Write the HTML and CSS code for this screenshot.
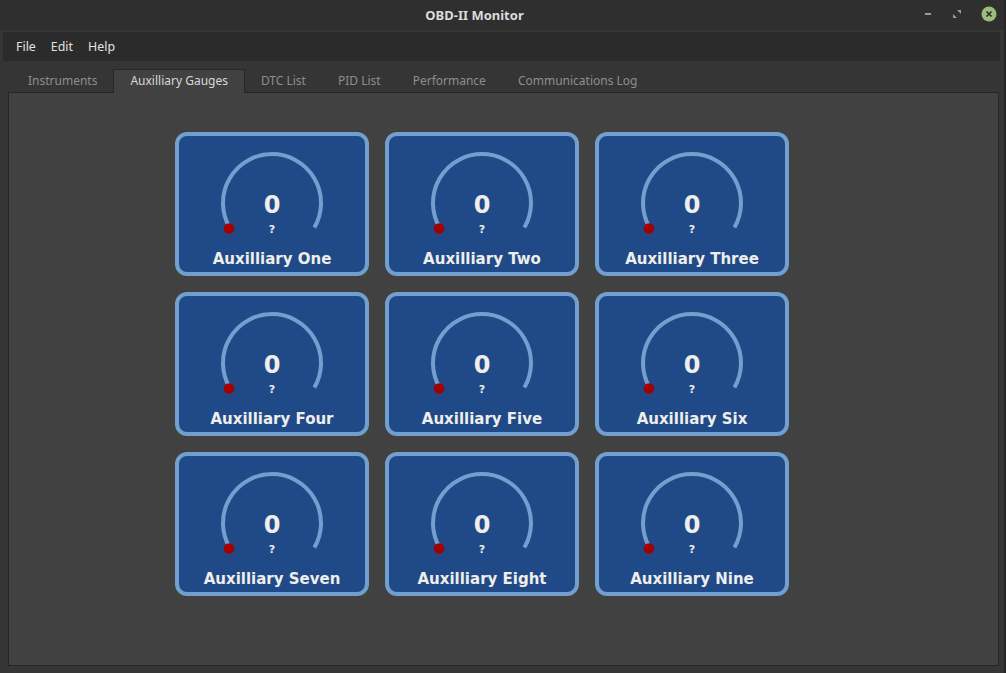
FILE: index.html
```html
<!DOCTYPE html>
<html>
<head>
<meta charset="utf-8">
<title>OBD-II Monitor</title>
<link rel="stylesheet" href="styles.css">
</head>
<body>
<div class="window">
  <div class="titlebar">
    <div class="title">OBD-II Monitor</div>
    <div class="controls">
      <span class="ctl-min"></span>
      <svg class="ctl-max" width="10" height="10" viewBox="0 0 10 10"><path d="M5 1h4v4z M1 5v4h4z" fill="#9a9a9a"/></svg>
      <svg class="ctl-close" width="16" height="16" viewBox="0 0 16 16"><circle cx="8" cy="8" r="7.5" fill="#9bbd7a"/><path d="M5.5 5.5l5 5M10.5 5.5l-5 5" stroke="#2b2b2b" stroke-width="1.6"/></svg>
    </div>
  </div>
  <div class="menubar">
    <span class="menu">File</span>
    <span class="menu">Edit</span>
    <span class="menu">Help</span>
  </div>
  <div class="tabs">
    <div class="tab">Instruments</div>
    <div class="tab active">Auxilliary Gauges</div>
    <div class="tab">DTC List</div>
    <div class="tab">PID List</div>
    <div class="tab">Performance</div>
    <div class="tab">Communications Log</div>
  </div>
  <div class="pane">
    <div class="grid">
      <div class="card"><div class="gauge"><svg viewBox="0 0 186 112" width="186" height="112"><path d="M50.56 91.5 A49 49 0 1 1 135.44 91.5" fill="none" stroke="#729fcf" stroke-width="4"/><circle cx="50" cy="92.5" r="5.3" fill="#a40000"/></svg><div class="value">0</div><div class="unit">?</div></div><div class="label">Auxilliary One</div></div>
      <div class="card"><div class="gauge"><svg viewBox="0 0 186 112" width="186" height="112"><path d="M50.56 91.5 A49 49 0 1 1 135.44 91.5" fill="none" stroke="#729fcf" stroke-width="4"/><circle cx="50" cy="92.5" r="5.3" fill="#a40000"/></svg><div class="value">0</div><div class="unit">?</div></div><div class="label">Auxilliary Two</div></div>
      <div class="card"><div class="gauge"><svg viewBox="0 0 186 112" width="186" height="112"><path d="M50.56 91.5 A49 49 0 1 1 135.44 91.5" fill="none" stroke="#729fcf" stroke-width="4"/><circle cx="50" cy="92.5" r="5.3" fill="#a40000"/></svg><div class="value">0</div><div class="unit">?</div></div><div class="label">Auxilliary Three</div></div>
      <div class="card"><div class="gauge"><svg viewBox="0 0 186 112" width="186" height="112"><path d="M50.56 91.5 A49 49 0 1 1 135.44 91.5" fill="none" stroke="#729fcf" stroke-width="4"/><circle cx="50" cy="92.5" r="5.3" fill="#a40000"/></svg><div class="value">0</div><div class="unit">?</div></div><div class="label">Auxilliary Four</div></div>
      <div class="card"><div class="gauge"><svg viewBox="0 0 186 112" width="186" height="112"><path d="M50.56 91.5 A49 49 0 1 1 135.44 91.5" fill="none" stroke="#729fcf" stroke-width="4"/><circle cx="50" cy="92.5" r="5.3" fill="#a40000"/></svg><div class="value">0</div><div class="unit">?</div></div><div class="label">Auxilliary Five</div></div>
      <div class="card"><div class="gauge"><svg viewBox="0 0 186 112" width="186" height="112"><path d="M50.56 91.5 A49 49 0 1 1 135.44 91.5" fill="none" stroke="#729fcf" stroke-width="4"/><circle cx="50" cy="92.5" r="5.3" fill="#a40000"/></svg><div class="value">0</div><div class="unit">?</div></div><div class="label">Auxilliary Six</div></div>
      <div class="card"><div class="gauge"><svg viewBox="0 0 186 112" width="186" height="112"><path d="M50.56 91.5 A49 49 0 1 1 135.44 91.5" fill="none" stroke="#729fcf" stroke-width="4"/><circle cx="50" cy="92.5" r="5.3" fill="#a40000"/></svg><div class="value">0</div><div class="unit">?</div></div><div class="label">Auxilliary Seven</div></div>
      <div class="card"><div class="gauge"><svg viewBox="0 0 186 112" width="186" height="112"><path d="M50.56 91.5 A49 49 0 1 1 135.44 91.5" fill="none" stroke="#729fcf" stroke-width="4"/><circle cx="50" cy="92.5" r="5.3" fill="#a40000"/></svg><div class="value">0</div><div class="unit">?</div></div><div class="label">Auxilliary Eight</div></div>
      <div class="card"><div class="gauge"><svg viewBox="0 0 186 112" width="186" height="112"><path d="M50.56 91.5 A49 49 0 1 1 135.44 91.5" fill="none" stroke="#729fcf" stroke-width="4"/><circle cx="50" cy="92.5" r="5.3" fill="#a40000"/></svg><div class="value">0</div><div class="unit">?</div></div><div class="label">Auxilliary Nine</div></div>
    </div>
  </div>
</div>
</body>
</html>
```

FILE: styles.css
```css
* { box-sizing: border-box; }
html, body { margin: 0; padding: 0; }
body {
  width: 1006px;
  height: 673px;
  overflow: hidden;
  background: #303030;
  font-family: "Noto Sans", "DejaVu Sans", sans-serif;
}
.window {
  width: 1006px;
  height: 673px;
  display: flex;
  flex-direction: column;
  background: #353535;
  border-right: 2px solid #262626;
}
.titlebar {
  height: 30px;
  flex: none;
  background: #2f2f2f;
  position: relative;
  display: flex;
  align-items: center;
  justify-content: center;
}
.title {
  color: #dcdcdc;
  font-weight: bold;
  font-size: 13px;
  margin-left: -55px;
}
.controls {
  position: absolute;
  right: 7px;
  top: 6px;
  display: flex;
  align-items: center;
  gap: 0;
}
.ctl-min {
  display: block;
  width: 6px;
  height: 2px;
  background: #9a9a9a;
  margin-right: 21px;
}
.ctl-max { margin-right: 19px; }
.menubar {
  flex: none;
  height: 29px;
  margin: 2px 4px 0 3px;
  background: #2b2b2b;
  display: flex;
  align-items: center;
  padding-left: 13px;
  gap: 15px;
  color: #e2e2e2;
  font-size: 12.4px;
}
.tabs {
  flex: none;
  display: flex;
  margin-top: 8px;
  padding-left: 12px;
  height: 23px;
  font-size: 12px;
  position: relative;
  z-index: 1;
}
.tab {
  padding: 0 16px;
  height: 23px;
  line-height: 24px;
  color: #8e8e8e;
}
.tab.active {
  color: #d8d8d8;
  background: #414141;
  border: 1px solid #262626;
  border-bottom: none;
  height: 24px;
  padding: 0 16px;
  line-height: 22px;
}
.pane {
  flex: 1;
  margin: 0 5px 7px 8px;
  background: #414141;
  border: 1px solid #262626;
  padding: 39px 0 0 166px;
}
.grid {
  display: grid;
  grid-template-columns: repeat(3, 194px);
  grid-auto-rows: 144px;
  column-gap: 16px;
  row-gap: 16px;
}
.card {
  width: 194px;
  height: 144px;
  border: 4px solid #729fcf;
  border-radius: 12px;
  background: #204a87;
  display: flex;
  flex-direction: column;
  color: #eeeeec;
  font-family: "DejaVu Sans", sans-serif;
  font-weight: bold;
}
.gauge {
  position: relative;
  height: 112px;
  flex: none;
}
.gauge svg { display: block; }
.value {
  position: absolute;
  left: 0;
  right: 0;
  top: 54px;
  text-align: center;
  font-size: 24px;
  line-height: 30px;
}
.unit {
  position: absolute;
  left: 0;
  right: 0;
  top: 87px;
  text-align: center;
  font-size: 11px;
  line-height: 14px;
}
.label {
  text-align: center;
  font-size: 15px;
  line-height: 20px;
  margin-top: 1px;
}
```
